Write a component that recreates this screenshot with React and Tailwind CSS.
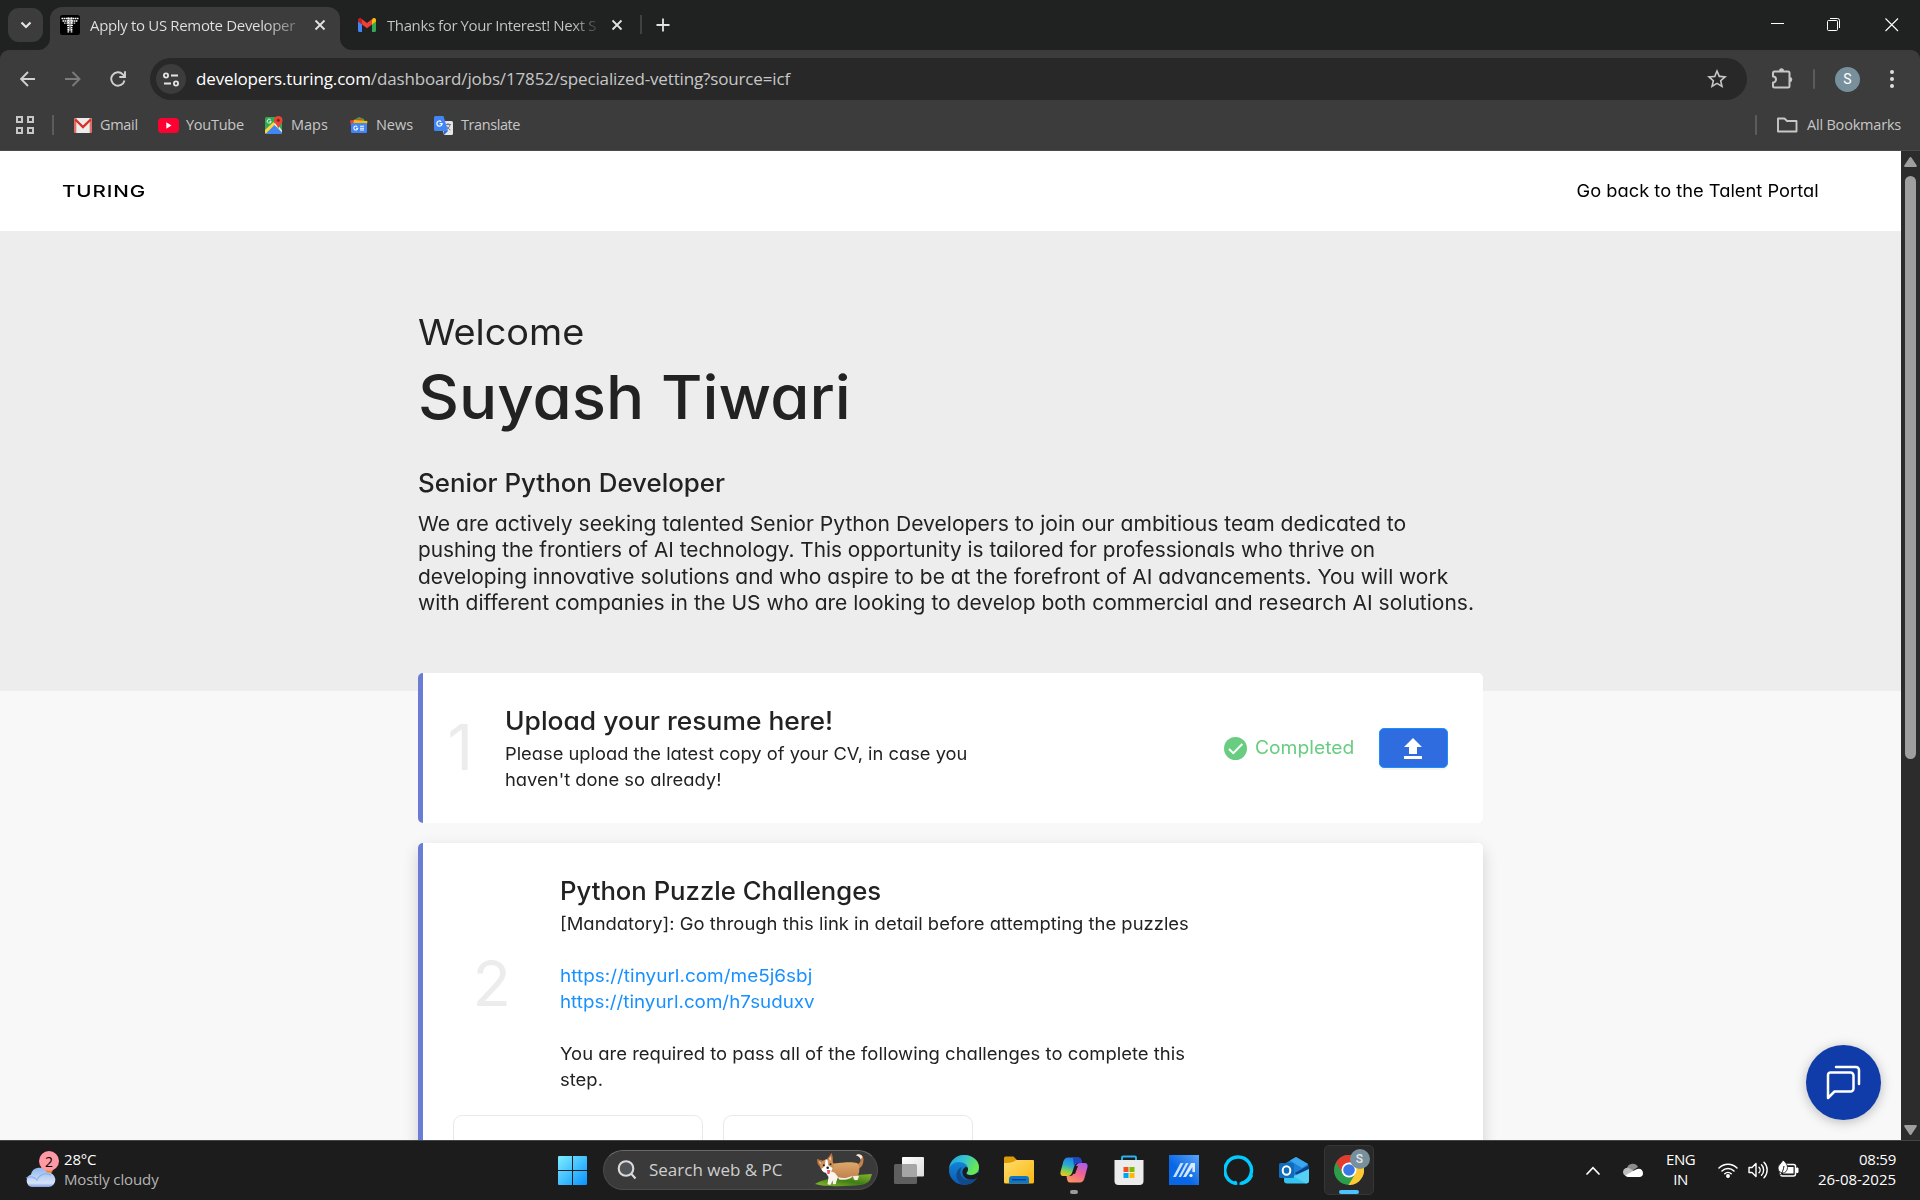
import React from "react";

const SEGOE = "font-['Open_Sans',sans-serif]";
const POP = "font-['Inter',sans-serif] [font-feature-settings:'cv11'] whitespace-nowrap";

function Close({ className }) {
  return (
    <svg viewBox="0 0 12 12" className={className} fill="none" stroke="#e3e3e3" strokeWidth="1.8">
      <path d="M1.500 1.500l9 9M10.500 1.500l-9 9" />
    </svg>
  );
}

function GmailM() {
  return (
    <svg viewBox="0 0 18 14" className="h-[14px] w-[18px]">
      <path d="M0 2v10.8C0 13.500.6 14 1.200 14H4V6L0 3z" fill="#4285f4" />
      <path d="M18 2v10.8c0 .7-.6 1.200-1.200 1.200H14V6l4-3z" fill="#34a853" />
      <path d="M14 1.500V6.400l4-3V2c0-1.900-2-2.600-3.300-1.600z" fill="#fbbc04" />
      <path d="M4 6.400V1.200l5 3.800 5-3.800v5.200L9 10.200z" fill="#ea4335" />
      <path d="M0 2v1.400l4 3V1.200L3.300.500C2-.5 0 .2 0 2z" fill="#c5221f" />
    </svg>
  );
}

function TabStrip() {
  return (
    <div className="flex h-[50px] items-start bg-[#202222]">
      <div className="mt-2 ml-2 flex h-[34px] w-[35px] items-center justify-center rounded-[11px] bg-[#3c3c3c]">
        <svg viewBox="0 0 12 8" className="ml-px h-[8px] w-[12px]" fill="none" stroke="#e3e3e3" strokeWidth="2.200">
          <path d="M1.500 1.500L6 6l4.500-4.500" />
        </svg>
      </div>
      <svg viewBox="0 0 12 12" className="mt-[38px] -ml-[5px] h-3 w-3">
        <path d="M12 0v12H0A12 12 0 0 0 12 0z" fill="#3c3c3c" />
      </svg>
      <div className="mt-[7px] flex h-[43px] w-[290px] items-start rounded-t-[12px] bg-[#3c3c3c] pt-2 pl-[10px]">
        <svg viewBox="0 0 20 20" className="h-5 w-5">
          <rect width="20" height="20" rx="2.500" fill="#000" />
          <path d="M1.500 3.500h17M2.500 6h15" stroke="#fff" strokeWidth="1.700" strokeDasharray="1.700 .5" />
          <path d="M4 8.200h12M7 10.500h6" stroke="#ddd" strokeWidth="1.200" strokeDasharray="1.600 .8" />
          <path d="M8.300 2.500v15M11.500 2.500v15" stroke="#fff" strokeWidth="1.700" strokeDasharray="1.700 .6" />
          <path d="M10 4v12" stroke="#bbb" strokeWidth="1.200" />
        </svg>
        <span className="ml-[10px] w-[206px] overflow-hidden bg-gradient-to-r from-[#e3e3e3] from-85% to-[#77787a] bg-clip-text text-[15px] leading-5 tracking-[-0.335px] whitespace-nowrap text-transparent">
          Apply to US Remote Developer
        </span>
        <Close className="mt-[4px] ml-[18px] h-[12px] w-[12px]" />
      </div>
      <svg viewBox="0 0 12 12" className="mt-[38px] h-3 w-3">
        <path d="M0 0v12h12A12 12 0 0 1 0 0z" fill="#3c3c3c" />
      </svg>
      <div className="mt-[18px] ml-[6px]"><GmailM /></div>
      <span className="mt-[15px] ml-[11px] w-[211px] overflow-hidden bg-gradient-to-r from-[#c7c7c7] from-88% to-[#3a3b3c] bg-clip-text text-[15px] leading-5 tracking-[-0.4px] whitespace-nowrap text-transparent">
        Thanks for Your Interest! Next S
      </span>
      <Close className="mt-[19px] ml-[13px] h-[12px] w-[12px]" />
      <div className="mt-[15px] ml-[17px] h-[19px] w-[2px] bg-[#3f4142]" />
      <svg viewBox="0 0 14 14" className="mt-[18px] ml-[14px] h-[14px] w-[14px]" stroke="#e3e3e3" strokeWidth="1.800">
        <path d="M7 .500v13M.500 7h13" />
      </svg>
      <div className="mt-[18px] mr-[21px] ml-auto flex">
        <svg viewBox="0 0 14 14" className="h-[14px] w-[14px]" stroke="#fff" strokeWidth="1">
          <path d="M0 5.500h13" />
        </svg>
        <svg viewBox="0 0 14 14" className="ml-[42px] h-[14px] w-[14px]" fill="none" stroke="#fff" strokeWidth="1">
          <rect x=".5" y="2.500" width="10" height="10" rx="1" />
          <path d="M3 .500h7.500a2 2 0 0 1 2 2V10" />
        </svg>
        <svg viewBox="0 0 14 14" className="ml-[44px] h-[14px] w-[14px]" stroke="#fff" strokeWidth="1.100">
          <path d="M.500.500l12.500 12.500M13 .500L.500 13" />
        </svg>
      </div>
    </div>
  );
}

function Toolbar() {
  return (
    <div className="bg-[#202222]">
      <div className="flex h-[58px] items-center rounded-t-[9px] bg-[#3c3c3c]">
        <svg viewBox="0 0 16 16" className="ml-[20px] h-4 w-4" fill="none" stroke="#d0d0d0" strokeWidth="1.900">
          <path d="M15 8H1.500M8 1L1 8l7 7" />
        </svg>
        <svg viewBox="0 0 16 16" className="ml-[29px] h-4 w-4" fill="none" stroke="#7b7b7b" strokeWidth="1.900">
          <path d="M0 8h13.500M7.500 1l7 7-7 7" />
        </svg>
        <svg viewBox="0 0 16 16" className="ml-[29px] h-4 w-4" fill="none" stroke="#d0d0d0" strokeWidth="1.900">
          <path d="M14.500 9.500A6.700 6.700 0 1 1 12.800 3.300L14.800 5.300M15 .300v5.700H9.300" />
        </svg>
        <div className="ml-[24px] flex h-[42px] w-[1597px] items-center rounded-full bg-[#282828] pl-[6px]">
          <div className="flex h-[30px] w-[30px] items-center justify-center rounded-full bg-[#3c3c3c]">
            <svg viewBox="0 0 16 15" className="h-[15px] w-[16px]" fill="none" stroke="#e3e3e3" strokeWidth="1.800">
              <circle cx="3" cy="3.500" r="2.100" />
              <path d="M8 3.500h7M1 11.500h7" />
              <circle cx="13" cy="11.500" r="2.100" />
            </svg>
          </div>
          <span className="ml-[10px] text-[17px] leading-6 tracking-[-0.149px] whitespace-nowrap text-[#c7c7c7]">
            <span className="text-white">developers.turing.com</span>/dashboard/jobs/17852/specialized-vetting?source=icf
          </span>
          <svg viewBox="0 0 24 24" className="mr-[18px] ml-auto h-[24px] w-[24px]" fill="#c7c7c7">
            <path d="M22 9.240l-7.190-.620L12 2 9.190 8.630 2 9.240l5.460 4.730L5.820 21 12 17.270 18.180 21l-1.630-7.030L22 9.240zM12 15.400l-3.760 2.270 1-4.280-3.320-2.880 4.380-.380L12 6.100l1.710 4.040 4.380.380-3.320 2.880 1 4.280L12 15.400z" />
          </svg>
        </div>
        <svg viewBox="0 0 22 22" className="-mt-[2px] ml-[24px] h-[22px] w-[22px]" fill="none" stroke="#c7c7c7" strokeWidth="2">
          <path d="M3.500 4.500H17a1.500 1.500 0 0 1 1.500 1.500v13a1.500 1.500 0 0 1-1.500 1.500H3.500A1.500 1.500 0 0 1 2 19v-3.500a3 3 0 0 0 0-6V6a1.500 1.500 0 0 1 1.500-1.500z" strokeLinejoin="round" />
          <path d="M8 4a2.500 2.800 0 0 1 5 0zM19 10a2.300 2.500 0 0 1 0 5z" fill="#c7c7c7" stroke="none" />
        </svg>
        <div className="ml-[20px] h-5 w-[2px] rounded bg-[#5c5c5c]" />
        <div className="ml-[20px] flex h-[25px] w-[25px] items-center justify-center rounded-full bg-[#78909c] font-['Roboto',sans-serif] text-[14px] text-white">S</div>
        <div className="ml-[30px] flex flex-col gap-[3px]">
          <div className="h-1 w-1 rounded-full bg-[#dedede]" />
          <div className="h-1 w-1 rounded-full bg-[#dedede]" />
          <div className="h-1 w-1 rounded-full bg-[#dedede]" />
        </div>
      </div>
    </div>
  );
}

function Bookmarks() {
  const label = "shrink-0 whitespace-nowrap";
  return (
    <div className="flex h-[43px] items-start border-b border-[#4a4a4a] bg-[#3c3c3c] text-[14.500px] text-[#c7c7c7]">
      <div className="flex h-[34px] w-full items-center">
        <svg viewBox="0 0 18 18" className="ml-[16px] h-[18px] w-[18px]" fill="none" stroke="#c7c7c7" strokeWidth="2">
          <path d="M1 1h5v5H1zM12 1h5v5h-5zM1 12h5v5H1zM12 12h5v5h-5z" />
        </svg>
        <div className="ml-[18px] h-5 w-[2px] bg-[#5c5c5c]" />
        <svg viewBox="0 0 18 15" className="ml-[20px] h-[15px] w-[18px]">
          <rect width="18" height="15" rx="1.500" fill="#ececec" />
          <path d="M0 15V1.500A1.500 1.500 0 0 1 1.500 0h.8v15z" fill="#d9473a" opacity=".75" />
          <path d="M18 15V1.500A1.500 1.500 0 0 0 16.500 0h-.8v15z" fill="#d9473a" opacity=".75" />
          <path d="M1.300 1.500L9 9l7.700-7.500" fill="none" stroke="#d93025" strokeWidth="2.400" />
        </svg>
        <span className={label + " ml-[8px] w-[38px] tracking-[-0.3px]"}>Gmail</span>
        <svg viewBox="0 0 21 15" className="ml-[20px] h-[15px] w-[21px]">
          <rect width="21" height="15" rx="4" fill="#ff0033" />
          <path d="M8.300 4.300v6.400l5.200-3.200z" fill="#fff" />
        </svg>
        <span className={label + " ml-[7px] w-[58px] tracking-[-0.25px]"}>YouTube</span>
        <svg viewBox="0 0 18 18" className="ml-[21px] h-[18px] w-[18px]">
          <rect y="1" width="17" height="17" rx="1.500" fill="#34a853" />
          <path d="M0 16.500L9 8l8 9.500a1 1 0 0 1-.5.500H1.500A1.500 1.500 0 0 1 0 16.500z" fill="#4285f4" />
          <path d="M0 14l8.500-8 2 2L1 17.600a1.500 1.500 0 0 1-1-1.100z" fill="#fdd835" />
          <path d="M9 8.500l2-2 6 8v2z" fill="#eee" />
          <path d="M13.300 0a4.300 4.300 0 0 0-4.300 4.300c0 3 3.300 4.200 4.300 8.700 1-4.500 4.300-5.700 4.300-8.700A4.300 4.300 0 0 0 13.300 0z" fill="#ea4335" />
          <circle cx="13.300" cy="4.300" r="1.500" fill="#8c1f17" />
          <path d="M5.700 3.800a2 2 0 1 0 .5 1.500H4.500" fill="none" stroke="#fff" strokeWidth=".9" />
        </svg>
        <span className={label + " ml-[8px] w-[37px]"}>Maps</span>
        <svg viewBox="0 0 18 16" className="ml-[22px] h-[16px] w-[18px]">
          <path d="M2 4L9 0l5 2 .5 4H2z" fill="#34a853" />
          <path d="M0 3.500l12-2 1 5L1 9z" fill="#ea4335" />
          <path d="M4 3l13.500 1-1 6L3 9z" fill="#fbbc04" />
          <rect x="1" y="6" width="16" height="10" rx="1.200" fill="#4285f4" />
          <path d="M7.300 9.700a2 2 0 1 0 .5 1.600H6M10 9.300h4M10 11.200h4M10 13h4" fill="none" stroke="#fff" strokeWidth="1.100" />
        </svg>
        <span className={label + " ml-[8px] w-[37px] tracking-[-0.05px]"}>News</span>
        <svg viewBox="0 0 19 19" className="ml-[21px] h-[19px] w-[19px]">
          <path d="M7 5h10.500A1.500 1.500 0 0 1 19 6.500V17.500a1.500 1.500 0 0 1-1.500 1.500H10z" fill="#e6e6e6" />
          <path d="M11 8.500h6M14 7v1.500M16 8.500c-.5 3-2.500 4.500-4.500 5.500M12.500 10c.5 1.500 2 3 4 4" fill="none" stroke="#6b7a88" strokeWidth="1" />
          <path d="M1.500 0H9.500L14 15H1.500A1.500 1.500 0 0 1 0 13.500v-12A1.500 1.500 0 0 1 1.500 0z" fill="#4285f4" />
          <path d="M10 19v-4h4z" fill="#3367d6" />
          <path d="M7.200 5.600a2.600 2.600 0 1 0 .9 2H5.600" fill="none" stroke="#fff" strokeWidth="1.200" />
        </svg>
        <span className={label + " ml-[8px] tracking-[-0.42px]"}>Translate</span>
        <div className="ml-auto h-5 w-[2px] rounded bg-[#5c5c5c]" />
        <svg viewBox="0 0 21 16" className="ml-[20px] h-[16px] w-[21px]" fill="none" stroke="#c7c7c7" strokeWidth="1.900" strokeLinejoin="round">
          <path d="M1 14.500V1.500h6.500L10 4h9.500v10.500z" />
        </svg>
        <span className={label + " mr-[19px] ml-[9px] w-[94px] tracking-[-0.2px]"}>All Bookmarks</span>
      </div>
    </div>
  );
}

function Scrollbar() {
  return (
    <div className="flex w-[19px] flex-col items-center bg-[#2c2c2c]">
      <svg viewBox="0 0 13 10" className="mt-[6px] h-[10px] w-[13px]" fill="#9f9f9f">
        <path d="M5.600.6L.4 8.200c-.5.900 0 1.800 1 1.800h10.200c1 0 1.500-.9 1-1.800L7.400.6a1.100 1.100 0 0 0-1.800 0z" />
      </svg>
      <div className="mt-[9px] h-[583px] w-[11px] rounded-full bg-[#9f9f9f]" />
      <svg viewBox="0 0 13 10" className="mt-auto mb-[5px] h-[10px] w-[13px]" fill="#9f9f9f">
        <path d="M5.600 9.400L.4 1.800C-.1.900.4 0 1.400 0h10.200c1 0 1.500.9 1 1.800L7.400 9.400a1.100 1.100 0 0 1-1.800 0z" />
      </svg>
    </div>
  );
}

function Page() {
  return (
    <div className={"relative flex-1 overflow-hidden bg-[#f8f8f8] text-[#222] " + POP}>
      <header className="flex h-[80px] items-center justify-between bg-white pr-[82px] pl-[62px] text-black">
        <span className="inline-block w-[62px] origin-left scale-x-[1.25] text-[16.500px] font-medium tracking-[0.7px]">TURING</span>
        <span className="origin-right scale-x-[1.045] text-[17.500px]">Go back to the Talent Portal</span>
      </header>
      <section className="h-[460px] bg-[#ededed] pt-[79px] pl-[418px]">
        <div className="w-max origin-left scale-x-[1.053] text-[36px] leading-[44px]">Welcome</div>
        <h1 className="mt-[3px] w-max origin-left scale-x-[1.041] text-[61px] leading-[80px] font-medium">Suyash Tiwari</h1>
        <h2 className="mt-[29px] w-max origin-left scale-x-[1.034] text-[25px] leading-[34px] font-medium">Senior Python Developer</h2>
        <div className="mt-[11px] flex flex-col items-start text-[20.500px] leading-[26.400px]">
          <div className="origin-left scale-x-[1.03]">We are actively seeking talented Senior Python Developers to join our ambitious team dedicated to</div>
          <div className="origin-left scale-x-[1.0146]">pushing the frontiers of AI technology. This opportunity is tailored for professionals who thrive on</div>
          <div className="origin-left scale-x-[1.022]">developing innovative solutions and who aspire to be at the forefront of AI advancements. You will work</div>
          <div className="origin-left scale-x-[1.0257]">with different companies in the US who are looking to develop both commercial and research AI solutions.</div>
        </div>
      </section>
      <main className="-mt-[18px] ml-[418px] flex w-[1065px] flex-col gap-5">
        <article className="flex h-[150px] rounded-[5px] border-l-[5px] border-[#6a7cd3] bg-white pt-8">
          <div className="mt-[10px] w-[50px] text-right text-[63px] leading-[64px] text-[#ececec]">1</div>
          <div className="ml-[32px]">
            <h3 className="w-max origin-left scale-x-[1.057] text-[25px] leading-8 font-medium">Upload your resume here!</h3>
            <div className="mt-1 flex flex-col items-start text-[17.500px] leading-[26px]">
              <div className="origin-left scale-x-[1.046]">Please upload the latest copy of your CV, in case you</div>
              <div className="origin-left scale-x-[1.05]">haven't done so already!</div>
            </div>
          </div>
          <div className="mt-[23px] mr-[35px] ml-auto flex h-10 items-center">
            <svg viewBox="0 0 23 23" className="h-[23px] w-[23px]">
              <circle cx="11.500" cy="11.500" r="11.500" fill="#68cd81" />
              <path d="M5 12l4.300 4.200L18.300 7" fill="none" stroke="#fff" strokeWidth="2" />
            </svg>
            <span className="-mt-px ml-2 w-[99px] origin-left scale-x-[1.07] text-[18px] text-[#68cd81]">Completed</span>
            <button className="ml-[25px] flex h-10 w-[69px] items-center justify-center rounded-[5px] border border-[#1890ff] bg-[#2f6ce0] shadow-[0_2px_0_rgba(0,0,0,0.04)]">
              <svg viewBox="0 0 18 21" className="mt-px mr-px h-[21px] w-[18px]" fill="#fff">
                <path d="M9 0L0 9h5v7h8V9h5zM0 18h18v3H0z" />
              </svg>
            </button>
          </div>
        </article>
        <article className="h-[420px] rounded-[5px] border-l-[5px] border-[#6a7cd3] bg-white pt-8 shadow-[0_6px_16px_rgba(0,0,0,0.16)]">
          <div className="flex h-[219px]">
            <div className="mt-[76px] w-[88px] text-right text-[63px] leading-[64px] text-[#ececec]">2</div>
            <div className="ml-[49px]">
              <h3 className="w-max origin-left scale-x-[1.027] text-[25px] leading-8 font-medium">Python Puzzle Challenges</h3>
              <div className="mt-[4px] flex flex-col items-start text-[17.500px] leading-[26.100px]">
                <div className="origin-left scale-x-[1.053]">[Mandatory]: Go through this link in detail before attempting the puzzles</div>
                <div className="mt-[26px] origin-left scale-x-[1.083] text-[#1890ff]">https://tinyurl.com/me5j6sbj</div>
                <div className="origin-left scale-x-[1.074] text-[#1890ff]">https://tinyurl.com/h7suduxv</div>
                <div className="mt-[26px] origin-left scale-x-[1.055]">You are required to pass all of the following challenges to complete this</div>
                <div className="origin-left scale-x-[1.055]">step.</div>
              </div>
            </div>
          </div>
          <div className="mt-[21px] flex gap-[20px] pl-[30px]">
            <div className="h-[140px] w-[250px] rounded-[9px] border border-[#e9e9e9]" />
            <div className="h-[140px] w-[250px] rounded-[9px] border border-[#e9e9e9]" />
          </div>
        </article>
      </main>
      <div className="absolute right-[20px] bottom-[20px] flex h-[75px] w-[75px] items-center justify-center rounded-full bg-[#103ca9] shadow-[0_2px_12px_rgba(0,0,0,0.25)]">
        <svg viewBox="0 0 35 35" className="h-[35px] w-[35px]" fill="none" stroke="#fff" strokeWidth="2.500" strokeLinecap="round" strokeLinejoin="round">
          <path d="M4.500 7.500h20a3 3 0 0 1 3 3v13a3 3 0 0 1-3 3h-16L2 33V10a2.500 2.500 0 0 1 2.500-2.500z" />
          <path d="M10 2h20a3 3 0 0 1 3 3v14" />
        </svg>
      </div>
    </div>
  );
}

function Slot({ children, className = "" }) {
  return <div className={"relative flex h-[50px] w-[55px] shrink-0 items-center justify-center " + className}>{children}</div>;
}

function Corgi() {
  return (
    <svg viewBox="0 0 58 34" className="h-[34px] w-[58px]">
      <defs>
        <linearGradient id="fur" x1="0" y1="0" x2="0" y2="1"><stop offset="0" stopColor="#dda86c" /><stop offset="1" stopColor="#bd7a48" /></linearGradient>
        <linearGradient id="lawn" x1="0" y1="1" x2="1" y2="0"><stop offset="0" stopColor="#8abf2b" /><stop offset=".5" stopColor="#3f7d16" /><stop offset="1" stopColor="#86b62c" /></linearGradient>
      </defs>
      <path d="M0 31c4-3 12-5 20-6l22-3 15-1-2 6c-2 3-6 4.500-10 5C32 33.500 10 34 0 31z" fill="url(#lawn)" />
      <path d="M39 11c4 1 7-1 6.500-5.500-.3-2-1.500-3-4-3.500 3-2 7 .5 7 4.500 0 6-3 9.500-7 9.500z" fill="#c58148" />
      <path d="M41 2.500c1.500-2 5.500-1.500 6.500 1.500l-2 2.500c-.5-2-2-3.500-4.500-4z" fill="#f5ece2" />
      <path d="M15 11c6-1 21-3 27-1 3 2 3 9 1 12l-1 4h-4l-1-3c-5 2.500-10 3-15 2l-1 3h-3l-5-9z" fill="url(#fur)" />
      <path d="M9 17c4 2 9 1 11 3l3 4-2 5.500c.5 1.500-.5 2-3 1.800l-.5-4-1.500 4c-1 .8-3 .7-3.500-.3l1-7z" fill="#fbf5ee" />
      <path d="M38 23l1 3.500c1 1 3.500 1 4-.2l1-3.500zM23 24c5 2 10 1 15-1.500l-2 2.500c-4 2-9 2-12 1.500z" fill="#f7eee3" />
      <path d="M2 6l7 2-3 6c-3-1-4-4-4-8zM16.500 0L12 6l6 4c0-4 0-7-1.500-10z" fill="#b9733f" />
      <path d="M3.500 8l3 1.500-1 3zM16 3l-2.500 3 3 2.500z" fill="#f1c1a0" />
      <ellipse cx="12" cy="13" rx="7" ry="6.500" fill="#cf9258" />
      <path d="M10.500 6.500h2l.8 6 4.200 2.500c-.5 3.500-2.500 5-5 5s-5-1-6-4l3.500-3z" fill="#fff" />
      <circle cx="8.800" cy="12.300" r="1" fill="#222" /><circle cx="15.500" cy="11.300" r="1" fill="#222" />
      <circle cx="12.700" cy="14.800" r="1.300" fill="#222" />
      <path d="M12 17h3.300l-.8 4h-2z" fill="#e5566b" />
    </svg>
  );
}

function Taskbar() {
  return (
    <footer className={"flex h-[60px] items-center border-t border-[#444] bg-[#1c1c1c] text-[15px] text-white " + SEGOE}>
      <div className="ml-[25px] flex w-[533px] items-start">
        <div className="relative -mt-px h-[38px] w-[31px] shrink-0">
          <svg viewBox="0 0 31 38" className="h-[38px] w-[31px]">
            <defs><linearGradient id="cl" x1="0" y1="0" x2="0" y2="1"><stop offset="0" stopColor="#8fb6ee" /><stop offset=".8" stopColor="#d6e4fa" /><stop offset="1" stopColor="#7f9fe0" /></linearGradient></defs>
            <circle cx="22" cy="18" r="6" fill="#f5821f" />
            <path d="M7 36a6.500 6.500 0 0 1-1-12.500A8.500 8.500 0 0 1 22 21.500 7.200 7.200 0 0 1 24 36z" fill="url(#cl)" />
            <path d="M1 27c4-2 9-1 11 2 2-5 8-8 14-5" fill="none" stroke="#7fa4e4" strokeWidth="1.200" opacity=".7" />
          </svg>
          <div className="absolute top-0 left-[14px] flex h-5 w-5 items-center justify-center rounded-full bg-[#ff99a4] text-[14px] text-black">2</div>
        </div>
        <div className="-mt-[3px] ml-[8px] leading-5">
          <div className="tracking-[-0.2px]">28°C</div>
          <div className="tracking-[-0.12px] text-[#b4b4b4]">Mostly cloudy</div>
        </div>
      </div>
      <svg viewBox="0 0 29 29" className="h-[29px] w-[29px] shrink-0">
        <defs><linearGradient id="win" x1="0" y1="0" x2="1" y2="1"><stop offset="0" stopColor="#7ceeff" /><stop offset="1" stopColor="#0a92ff" /></linearGradient></defs>
        <path d="M1 0h13v14H0V1a1 1 0 0 1 1-1zM15 0h13a1 1 0 0 1 1 1v13H15zM0 15h14v14H1a1 1 0 0 1-1-1zM15 15h14v13a1 1 0 0 1-1 1H15z" fill="url(#win)" />
      </svg>
      <div className="-mt-px ml-4 flex h-10 w-[275px] shrink-0 items-center rounded-full border border-[#4b4b4b] border-t-[#6a6a6a] bg-[#3a3a3a]">
        <svg viewBox="0 0 20 20" className="ml-[13px] h-5 w-5" fill="#505358" stroke="#dadada" strokeWidth="2.100">
          <circle cx="9" cy="8.500" r="7.300" /><path d="M14 13.500l4.500 5" />
        </svg>
        <span className="ml-[12px] w-[133px] text-[17px] whitespace-nowrap text-[#cfcfcf]">Search web &amp; PC</span>
        <div className="ml-[33px]"><Corgi /></div>
      </div>
      <div className="-mt-px ml-[3px] flex">
        <Slot>
          <svg viewBox="0 0 30 29" className="h-[29px] w-[30px]">
            <defs><linearGradient id="tv" x1="0" y1="0" x2="1" y2="1"><stop offset="0" stopColor="#fff" /><stop offset="1" stopColor="#dcdcdc" /></linearGradient></defs>
            <rect y="8" width="23" height="20" rx="1.500" fill="#5f5f5f" />
            <rect x="8" y="1" width="22" height="19.500" rx="1" fill="url(#tv)" />
            <path d="M8 8h13.500a1.500 1.500 0 0 1 1.500 1.500v11H9a1 1 0 0 1-1-1z" fill="#a6a6a6" />
          </svg>
        </Slot>
        <Slot>
          <svg viewBox="0 0 30 30" className="h-[30px] w-[30px]">
            <defs>
              <linearGradient id="e1" x1="0" y1="0" x2="1" y2=".4"><stop offset="0" stopColor="#1c9fe0" /><stop offset=".5" stopColor="#35c1d4" /><stop offset="1" stopColor="#6be850" /></linearGradient>
              <linearGradient id="e2" x1="0" y1="0" x2="0" y2="1"><stop offset="0" stopColor="#1490df" /><stop offset="1" stopColor="#0c59b4" /></linearGradient>
            </defs>
            <circle cx="15" cy="15" r="15" fill="url(#e2)" />
            <path d="M0 14C1 5 8 0 15 0c9 0 15 6 15 12 0 5-4 8-8 8-3 0-5-1-4.500-2 1-1 1.500-2 1.500-4 0-4-4-7-9-7S1 10 0 14z" fill="url(#e1)" />
            <path d="M13 12c-4 5-1 13 7 13 3 0 5-1 8-2-3 5-8 7-13 7-8-2-11-14-2-18z" fill="#114a8b" />
            <path d="M19 14c0 3-2 3-1.500 4.500C18.500 20.500 24 21 28 18l2.500-1v4.500l-3 1.500c-4 3-13 2-14-5-.3-2 .5-5 3-6 1.500 0 2.500.5 2.500 2z" fill="#1c1c1c" />
          </svg>
        </Slot>
        <Slot>
          <svg viewBox="0 0 30 28" className="h-[28px] w-[30px]">
            <defs><linearGradient id="fo" x1="0" y1="0" x2="1" y2="1"><stop offset="0" stopColor="#ffdc6e" /><stop offset="1" stopColor="#fcb70d" /></linearGradient></defs>
            <path d="M0 2a1.500 1.500 0 0 1 1.500-1.500h8L13 4h16v6H0z" fill="#dd9b08" />
            <path d="M0 7c5 0 10-.5 12-3h17a1 1 0 0 1 1 1v21a1.500 1.500 0 0 1-1.500 1.500h-27A1.500 1.500 0 0 1 0 26z" fill="url(#fo)" />
            <path d="M5 27.500V23a3 3 0 0 1 3-3h14a3 3 0 0 1 3 3v4.500z" fill="#0f77cb" />
            <path d="M8 23.700h14" stroke="#063f7c" strokeWidth="1.300" />
          </svg>
        </Slot>
        <Slot>
          <svg viewBox="0 0 28 26" className="h-[26px] w-[28px]">
            <defs>
              <linearGradient id="c1" x1=".5" y1="0" x2=".2" y2="1"><stop offset="0" stopColor="#1f7cf0" /><stop offset=".45" stopColor="#2ab0c8" /><stop offset=".75" stopColor="#8fd14a" /><stop offset="1" stopColor="#f3c51b" /></linearGradient>
              <linearGradient id="c2" x1=".8" y1="0" x2=".3" y2="1"><stop offset="0" stopColor="#a65cf2" /><stop offset=".5" stopColor="#f1638f" /><stop offset="1" stopColor="#fb9460" /></linearGradient>
            </defs>
            <path d="M8 .500h10c2 0 3 1 3.500 3L22 6h-4c-2 0-3 1-4 4l-2 6c-1 2-2 3-4 3H3c-2 0-3-2-2.500-4l3-11C4.500 1.500 6 .500 8 .500z" fill="url(#c1)" />
            <path d="M13 .500h5c2 0 3 1 3.500 3L22 6h-4c-2 0-3 .5-4 3z" fill="#1b46c4" />
            <path d="M20 25.500H10c-2 0-2.500-1.500-3-3.500L6.500 19H10c2 0 3-1 4-4l2-6c1-2 2-3 4-3h5c2 0 3 2 2.500 4l-3 11c-1 3.500-2.500 4.500-4.500 4.500z" fill="url(#c2)" />
            <path d="M12.500 16.500l3-7.500h2.500l-3 8z" fill="#1c1c1c" />
          </svg>
          <div className="absolute bottom-[1px] h-1 w-2 rounded-full bg-[#9a9a9a]" />
        </Slot>
        <Slot>
          <svg viewBox="0 0 30 30" className="h-[30px] w-[30px]">
            <path d="M8 6V2.500a1 1 0 0 1 1-1h12a1 1 0 0 1 1 1V6" fill="none" stroke="#28b4ee" strokeWidth="1.900" />
            <path d="M.500 5h29v21a4 4 0 0 1-4 4h-21a4 4 0 0 1-4-4z" fill="#ececec" />
            <path d="M9.500 12h5v5h-5z" fill="#f25022" /><path d="M15.500 12h5v5h-5z" fill="#7fba00" />
            <path d="M9.500 18h5v5h-5z" fill="#00a4ef" /><path d="M15.500 18h5v5h-5z" fill="#ffb900" />
          </svg>
        </Slot>
        <Slot>
          <svg viewBox="0 0 30 30" className="h-[30px] w-[30px]">
            <defs><linearGradient id="as" x1="0" y1="1" x2="1" y2="0"><stop offset=".4" stopColor="#0767e6" /><stop offset="1" stopColor="#5ba3f7" /></linearGradient></defs>
            <path d="M0 0h30v30H0z" fill="url(#as)" />
            <path d="M4 22L11.500 8h3L7 22zM9.500 22L17 8h2.500L12 22z" fill="#c9dfff" />
            <path d="M14 22l8-14h4v9h-2.600v-5L17 22z" fill="#dbe9ff" />
            <circle cx="22" cy="20.500" r="1.600" fill="#fff" />
          </svg>
        </Slot>
        <Slot>
          <svg viewBox="0 0 30 30" className="h-[30px] w-[30px]">
            <path d="M12.500 28.500A13.300 13.300 0 1 1 17 28.300" fill="none" stroke="#00caff" strokeWidth="3.400" />
            <path d="M11 25.500c2 .8 2.600 2 2.400 4.400l-4-1.200zM28 19c-2 5-6 7-9.500 7.500l-3 1v2.500c6 0 11-3 13.500-9z" fill="#00caff" />
          </svg>
        </Slot>
        <Slot>
          <svg viewBox="0 0 30 28" className="h-[28px] w-[30px]">
            <path d="M5 8L17 1l12 7v10L17 24 5 16z" fill="#1f7fd4" />
            <path d="M11 4.500L17 1l12 7-6 4z" fill="#3aa7ee" />
            <path d="M16 17l14-8v5l-10 8z" fill="#0a3f8e" />
            <path d="M5 15l11 5 14-7v11.500a3 3 0 0 1-3 3H8a3 3 0 0 1-3-3z" fill="#35c3f1" />
            <path d="M30 13v11.500a3 3 0 0 1-3 3L14 20z" fill="#6ad8f7" opacity=".6" />
            <rect y="7" width="15" height="15" rx="1.500" fill="#0f6cbd" />
            <ellipse cx="7.500" cy="14.500" rx="3.800" ry="4.300" fill="none" stroke="#fff" strokeWidth="2" />
          </svg>
        </Slot>
        <Slot>
          <div className="flex h-[50px] w-[50px] items-center justify-center rounded-[5px] border border-[#363636] bg-[#292929]">
            <svg viewBox="0 0 30 30" className="h-[30px] w-[30px]">
              <circle cx="15" cy="15" r="15" fill="#2c9d4a" />
              <path d="M2 7.500A15 15 0 0 1 28 7.500H15L9 18.500z" fill="#e33b2e" />
              <path d="M28 7.500A15 15 0 0 1 14.500 30L21.500 18.500 15 7.500z" fill="#fcc934" />
              <circle cx="15" cy="15" r="7.500" fill="#fff" /><circle cx="15" cy="15" r="5.800" fill="#3b78e7" />
            </svg>
          </div>
          <div className="absolute top-[4px] right-[6.500px] flex h-5 w-5 items-center justify-center rounded-full bg-[#78909c] font-['Roboto',sans-serif] text-[12px] font-medium text-[#e3e9ec]">S</div>
          <div className="absolute bottom-[1px] h-1 w-5 rounded-full bg-[#4cc2ff]" />
        </Slot>
      </div>
      <div className="mr-[24px] ml-auto flex items-center">
        <svg viewBox="0 0 14 9" className="-mt-px h-[9px] w-[14px]" fill="none" stroke="#fff" strokeWidth="1.700" strokeLinecap="round"><path d="M1 8l6-6.300L13 8" /></svg>
        <svg viewBox="0 0 20 14" className="-mt-px ml-[23px] h-[14px] w-[20px]">
          <path d="M4 5a6 6 0 0 1 11-1l-6 4z" fill="#8c8c8c" />
          <path d="M0 9.500A4.500 4.500 0 0 1 7 5.500l6 4-11 3A4 4 0 0 1 0 9.500z" fill="#bdbdbd" />
          <path d="M2 12.500L13 6.500c4-2 7 .5 7 4 0 2-1.500 3.500-3.500 3.500H5a4.500 4.500 0 0 1-3-1.500z" fill="#fff" />
        </svg>
        <div className="-mt-[4px] ml-[23px] w-[29px] text-center leading-5 tracking-[-0.4px]">
          <div>ENG</div><div>IN</div>
        </div>
        <svg viewBox="0 0 20 16" className="-mt-[2px] ml-[23px] h-[16px] w-[20px]" fill="none" stroke="#fff" strokeWidth="1.500" strokeLinecap="round">
          <path d="M1 6a12.500 12.500 0 0 1 18 0M4 9a8.300 8.300 0 0 1 12 0M6.800 11.800a4.600 4.600 0 0 1 6.400 0" />
          <circle cx="10" cy="14" r="1.200" fill="#fff" />
        </svg>
        <svg viewBox="0 0 20 18" className="-mt-[2px] ml-[10px] h-[18px] w-[20px]" fill="none" stroke="#fff" strokeWidth="1.400" strokeLinecap="round" strokeLinejoin="round">
          <path d="M1 6.500h3l4-4v13l-4-4H1z" /><path d="M11 6.200a4 4 0 0 1 0 5.600M13.500 3.800a7.400 7.400 0 0 1 0 10.400M16 1.300a11 11 0 0 1 0 15.400" />
        </svg>
        <svg viewBox="0 0 21 18" className="-mt-[3px] ml-[10px] h-[18px] w-[21px]">
          <rect x="2.500" y="4.500" width="15" height="11.500" rx="2" fill="none" stroke="#fff" strokeWidth="1.500" />
          <path d="M18.500 8h1.500v4.500h-1.500z" fill="#fff" stroke="#fff" />
          <rect x="5" y="7" width="10.500" height="6.500" fill="#fff" />
          <path d="M5 0c2 2 4.500 4 4.500 7.500S7 13 5 13 0 11.500 0 8c0-3 3-4 5-8z" fill="#fff" stroke="#1c1c1c" strokeWidth=".8" />
          <path d="M6 6c-.5 4-2 7-4 9.500" stroke="#1c1c1c" strokeWidth="1" fill="none" />
        </svg>
        <div className="-mt-[4px] ml-[19px] w-[78px] text-right leading-5">
          <div className="tracking-[-0.25px]">08:59</div><div className="tracking-[-0.03px]">26-08-2025</div>
        </div>
      </div>
    </footer>
  );
}

export default function App() {
  return (
    <div className={"flex h-[1200px] w-[1920px] flex-col overflow-hidden bg-[#202222] " + SEGOE}>
      <TabStrip />
      <Toolbar />
      <Bookmarks />
      <div className="flex min-h-0 flex-1">
        <Page />
        <Scrollbar />
      </div>
      <Taskbar />
    </div>
  );
}
